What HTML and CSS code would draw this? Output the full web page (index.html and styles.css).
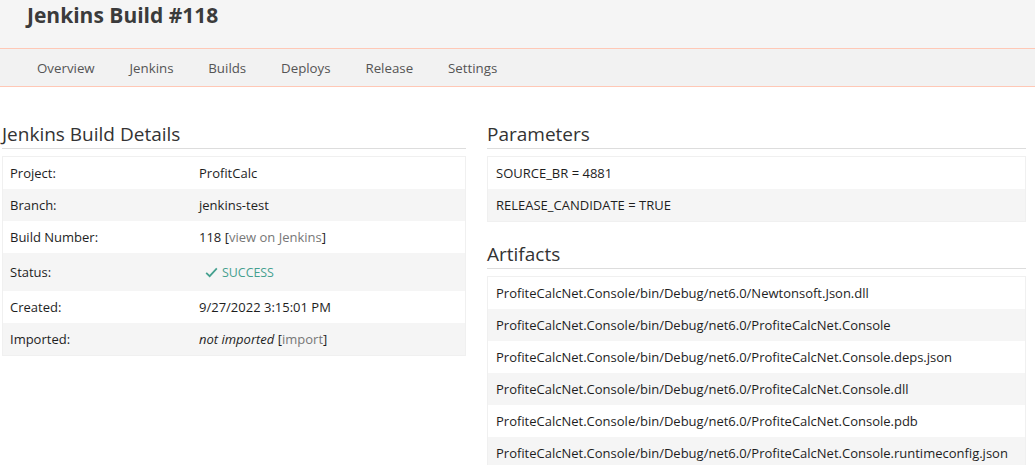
FILE: index.html
```html
<!DOCTYPE html>
<html lang="en">
<head>
<meta charset="utf-8">
<title>Jenkins Build #118</title>
<link rel="stylesheet" href="styles.css">
</head>
<body>
<header class="topbar">
  <h1 class="title">Jenkins Build #118</h1>
</header>
<nav class="nav">
  <a class="nav-item" href="#">Overview</a>
  <a class="nav-item" href="#">Jenkins</a>
  <a class="nav-item" href="#">Builds</a>
  <a class="nav-item" href="#">Deploys</a>
  <a class="nav-item" href="#">Release</a>
  <a class="nav-item" href="#">Settings</a>
</nav>
<main class="content">
  <section class="col">
    <h2 class="section-title">Jenkins Build Details</h2>
    <div class="table">
      <div class="row"><span class="label">Project:</span><span class="value">ProfitCalc</span></div>
      <div class="row"><span class="label">Branch:</span><span class="value">jenkins-test</span></div>
      <div class="row"><span class="label">Build Number:</span><span class="value">118 <span class="bracket">[<a class="link" href="#">view on Jenkins</a>]</span></span></div>
      <div class="row row-tall"><span class="label">Status:</span><span class="value status"><svg class="check" viewBox="0 0 14 12" width="13" height="11"><path d="M1.2 6.4 L5 10 L12.8 1.6" fill="none" stroke="currentColor" stroke-width="1.9"/></svg>SUCCESS</span></div>
      <div class="row"><span class="label">Created:</span><span class="value">9/27/2022 3:15:01 PM</span></div>
      <div class="row"><span class="label">Imported:</span><span class="value"><em>not imported</em> <span class="bracket">[<a class="link" href="#">import</a>]</span></span></div>
    </div>
  </section>
  <section class="col">
    <h2 class="section-title">Parameters</h2>
    <div class="table">
      <div class="row"><span>SOURCE_BR = 4881</span></div>
      <div class="row"><span>RELEASE_CANDIDATE = TRUE</span></div>
    </div>
    <h2 class="section-title section-gap">Artifacts</h2>
    <div class="table">
      <div class="row"><span>ProfiteCalcNet.Console/bin/Debug/net6.0/Newtonsoft.Json.dll</span></div>
      <div class="row"><span>ProfiteCalcNet.Console/bin/Debug/net6.0/ProfiteCalcNet.Console</span></div>
      <div class="row"><span>ProfiteCalcNet.Console/bin/Debug/net6.0/ProfiteCalcNet.Console.deps.json</span></div>
      <div class="row"><span>ProfiteCalcNet.Console/bin/Debug/net6.0/ProfiteCalcNet.Console.dll</span></div>
      <div class="row"><span>ProfiteCalcNet.Console/bin/Debug/net6.0/ProfiteCalcNet.Console.pdb</span></div>
      <div class="row"><span>ProfiteCalcNet.Console/bin/Debug/net6.0/ProfiteCalcNet.Console.runtimeconfig.json</span></div>
    </div>
  </section>
</main>
</body>
</html>
```
FILE: styles.css
```css
* { box-sizing: border-box; }
html, body { margin: 0; padding: 0; }
body {
  font-family: "Open Sans", "Noto Sans", sans-serif;
  font-size: 13px;
  color: #1e1e1e;
  background: #fff;
  overflow: hidden;
}
.topbar {
  background: #f5f5f5;
  height: 49px;
  border-bottom: 1px solid #ffc8b6;
  padding: 0 27px;
}
.title {
  margin: 0;
  font-size: 21px;
  font-weight: 700;
  color: #3b3b3b;
  line-height: 30px;
}
.nav {
  display: flex;
  background: #f2f2f2;
  height: 38px;
  border-bottom: 1px solid #ffc8b6;
  padding-left: 37px;
  align-items: center;
}
.nav-item {
  color: #555;
  font-size: 13.3px;
  text-decoration: none;
  margin-right: 34.8px;
}
.content {
  display: grid;
  grid-template-columns: 464px 539px;
  column-gap: 21px;
  padding: 35px 0 0 2px;
}
.section-title {
  margin: 0 0 7px;
  font-size: 19px;
  font-weight: 400;
  color: #333;
  line-height: 24px;
  border-bottom: 1px solid #ddd;
  padding-bottom: 2px;
}
.section-gap { margin-top: 20px; }
.table {
  border: 1px solid #f0f0f0;
}
.row {
  display: flex;
  align-items: center;
  height: 32px;
  padding: 0 7px;
}
.col + .col .row { padding-left: 8px; }
.row:nth-child(even) { background: #f5f5f5; }
.row-tall { height: 38px; }
.label { width: 189px; flex: none; }
.value { flex: 1; }
.bracket { color: #1e1e1e; }
.link { color: #777; text-decoration: none; }
.status {
  color: #45a08f;
  font-size: 12.4px;
  display: flex;
  align-items: center;
  padding-left: 6px;
}
.check { margin-right: 4px; }
```
